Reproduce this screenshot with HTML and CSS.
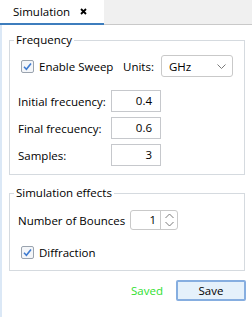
FILE: index.html
```html
<html>
<head>
  <meta charset="utf-8">
  <title>Simulation</title>
  <link rel="stylesheet" href="styles.css">
</head>
<body>
  <div class="tabbar">
    <div class="tab">
      <span class="tab-title">Simulation</span>
      <svg class="tab-close" width="7" height="7" viewBox="0 0 7 7"><path d="M1 1 L6 6 M6 1 L1 6" stroke="#000" stroke-width="1.8"/></svg>
    </div>
    <div class="tab-fill"></div>
  </div>

  <div class="panel">
    <fieldset class="group group-freq">
      <legend>Frequency</legend>
      <div class="row row-sweep">
        <label class="check check-sweep">
          <svg class="box" width="13" height="13" viewBox="0 0 13 13"><rect x="0.5" y="0.5" width="12" height="12" rx="1.5" fill="#f4f6f9" stroke="#9aa3ae"/><path d="M3 6.8 L5.4 9.2 L10 3.6" fill="none" stroke="#3f7bd0" stroke-width="1.6"/></svg>
          Enable Sweep
        </label>
        <span class="units-label">Units:</span>
        <div class="select">
          <span>GHz</span>
          <svg width="9" height="5" viewBox="0 0 9 5"><path d="M0.5 0.5 L4.5 4.5 L8.5 0.5" fill="none" stroke="#7a7a7a"/></svg>
        </div>
      </div>
      <div class="row field first">
        <span class="field-label">Initial frecuency:</span>
        <div class="num">0.4</div>
      </div>
      <div class="row field">
        <span class="field-label">Final frecuency:</span>
        <div class="num">0.6</div>
      </div>
      <div class="row field">
        <span class="field-label">Samples:</span>
        <div class="num">3</div>
      </div>
    </fieldset>

    <fieldset class="group group-effects">
      <legend>Simulation effects</legend>
      <div class="row row-bounces">
        <span class="bounces-label">Number of Bounces</span>
        <div class="spin">
          <span class="spin-value">1</span>
          <span class="spin-arrows">
            <svg width="9" height="14" viewBox="0 0 9 14"><path d="M0.5 5 L4.5 1 L8.5 5 M0.5 9 L4.5 13 L8.5 9" fill="none" stroke="#7a7a7a"/></svg>
          </span>
        </div>
      </div>
      <div class="row row-diffraction">
        <label class="check">
          <svg class="box" width="13" height="13" viewBox="0 0 13 13"><rect x="0.5" y="0.5" width="12" height="12" rx="1.5" fill="#f4f6f9" stroke="#9aa3ae"/><path d="M3 6.8 L5.4 9.2 L10 3.6" fill="none" stroke="#3f7bd0" stroke-width="1.6"/></svg>
          Diffraction
        </label>
      </div>
    </fieldset>

    <div class="actions">
      <span class="saved">Saved</span>
      <button class="save">Save</button>
    </div>
  </div>
</body>
</html>
```

FILE: styles.css
```css
body {
  margin: 0;
  font-family: "Open Sans", "Noto Sans", sans-serif;
  font-size: 11.5px;
  color: #000;
  background: #fff;
}

/* tab header */
.tabbar {
  display: flex;
  height: 25px;
}

.tab {
  width: 104px;
  height: 25px;
  box-sizing: border-box;
  border-bottom: 2px solid #3d7dbd;
  display: flex;
  align-items: center;
  padding-left: 13px;
  padding-bottom: 1px;
}

.tab-close {
  margin-left: 10px;
}

.tab-fill {
  flex: 1;
  height: 25px;
  box-sizing: border-box;
  background: #f0f0f0;
  border-bottom: 1px solid #c9c9c9;
}

/* content */
.panel {
  border-left: 2px solid #dbe8f6;
  height: 292px;
  box-sizing: border-box;
  padding-top: 7px;
}

.group {
  margin: 0 7px 0 7px;
  padding: 0 8px 8px 8px;
  border: 1px solid #d5dadf;
  min-width: 0;
}

.group legend {
  margin-left: -4px;
  padding: 0 2px;
  line-height: 16px;
}

.group-effects {
  margin-top: 10px;
  padding-bottom: 7px;
}

.row {
  display: flex;
  align-items: center;
  height: 22px;
}

.row-sweep {
  margin-top: 7px;
  padding-left: 3px;
}

.check {
  display: flex;
  align-items: center;
}

.check .box {
  margin-right: 5px;
}

.check-sweep {
  width: 102px;
}

.units-label {
  width: 38px;
}

.select {
  width: 72px;
  height: 22px;
  box-sizing: border-box;
  border: 1px solid #c9c9c9;
  border-radius: 3px;
  display: flex;
  align-items: center;
  justify-content: space-between;
  padding: 0 6px 0 7px;
}

.field {
  margin-top: 5px;
}

.field.first {
  margin-top: 13px;
}

.field-label {
  width: 93px;
}

.num {
  width: 50px;
  height: 22px;
  box-sizing: border-box;
  border: 1px solid #c6c8cc;
  text-align: right;
  padding-right: 8px;
  line-height: 20px;
}

.row-bounces {
  margin-top: 8px;
}

.bounces-label {
  width: 112px;
}

.spin {
  width: 48px;
  height: 20px;
  box-sizing: border-box;
  border: 1px solid #c9c9c9;
  border-radius: 3px;
  display: flex;
}

.spin-value {
  width: 29px;
  text-align: right;
  padding-right: 4px;
  box-sizing: border-box;
  line-height: 18px;
}

.spin-arrows {
  flex: 1;
  border-left: 1px solid #c9c9c9;
  display: flex;
  align-items: center;
  justify-content: center;
}

.row-diffraction {
  margin-top: 10px;
  padding-left: 3px;
}

.actions {
  display: flex;
  justify-content: flex-end;
  align-items: center;
  margin-top: 9px;
  padding-right: 6px;
}

.saved {
  color: #2ee02e;
  margin-right: 13px;
}

.save {
  width: 70px;
  height: 21px;
  font-family: inherit;
  font-size: 11.5px;
  color: #000;
  background: #e5f1fb;
  border: 2px solid #86aee0;
  border-radius: 2px;
  padding: 0;
}
```
